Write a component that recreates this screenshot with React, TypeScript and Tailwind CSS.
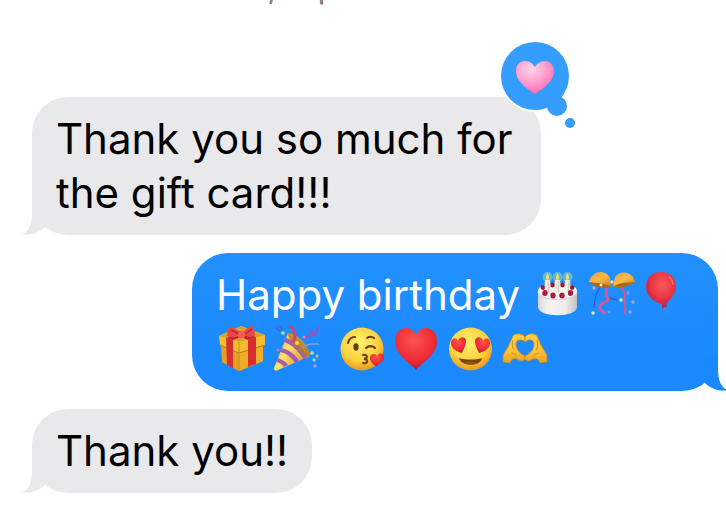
import type { ReactNode } from 'react';

function Emoji({ label, children }: { label: string; children: ReactNode }) {
  return (
    <svg role="img" aria-label={label} viewBox="1 0 54 54" className="inline-block size-[54px] align-top">
      {children}
    </svg>
  );
}

const HEART = 'M27 48C24 43 6 34 6 19C6 11 11 6 17 6C22 6 25 9 27 13C29 9 32 6 37 6C43 6 48 11 48 19C48 34 30 43 27 48Z';

function Gradients() {
  return (
    <svg width="0" height="0" className="absolute" aria-hidden="true">
      <defs>
        <radialGradient id="face" cx="45%" cy="35%" r="65%">
          <stop offset="0" stopColor="#fff06c" />
          <stop offset="0.65" stopColor="#fdd23f" />
          <stop offset="1" stopColor="#eb981d" />
        </radialGradient>
        <radialGradient id="red" cx="45%" cy="30%" r="70%">
          <stop offset="0" stopColor="#fb5450" />
          <stop offset="0.7" stopColor="#ef2a34" />
          <stop offset="1" stopColor="#b81b2c" />
        </radialGradient>
        <radialGradient id="balloon" cx="55%" cy="35%" r="65%">
          <stop offset="0" stopColor="#fa5a5c" />
          <stop offset="0.6" stopColor="#e83544" />
          <stop offset="1" stopColor="#bd1f3a" />
        </radialGradient>
        <radialGradient id="pink" cx="40%" cy="25%" r="80%">
          <stop offset="0" stopColor="#ffd5ea" />
          <stop offset="0.5" stopColor="#ff9fcd" />
          <stop offset="1" stopColor="#fb62ad" />
        </radialGradient>
        <linearGradient id="cake" x1="0" x2="1">
          <stop offset="0" stopColor="#d4d3d6" />
          <stop offset="0.25" stopColor="#f6f4f3" />
          <stop offset="0.7" stopColor="#efeceb" />
          <stop offset="1" stopColor="#c4c1c5" />
        </linearGradient>
        <linearGradient id="gold" x1="0" y1="0" x2="1" y2="1">
          <stop offset="0" stopColor="#e9a033" />
          <stop offset="0.5" stopColor="#f8ba4b" />
          <stop offset="1" stopColor="#c57a20" />
        </linearGradient>
        <linearGradient id="cone" x1="0" y1="0" x2="1" y2="0.6">
          <stop offset="0" stopColor="#c99226" />
          <stop offset="0.45" stopColor="#ffe36a" />
          <stop offset="1" stopColor="#d79a28" />
        </linearGradient>
        <linearGradient id="hand" x1="0" y1="0" x2="0" y2="1">
          <stop offset="0" stopColor="#ffce42" />
          <stop offset="0.6" stopColor="#fcc439" />
          <stop offset="1" stopColor="#e99e24" />
        </linearGradient>
      </defs>
    </svg>
  );
}

function Cake() {
  return (
    <Emoji label="Birthday cake">
      <path d="M7 23V39C7 50 46 50 46 39V23Z" fill="url(#cake)" />
      <ellipse cx="26.5" cy="23" rx="19.5" ry="8" fill="#faf8f7" />
      <path d="M7 24C8 34 45 34 46 24" fill="none" stroke="#d9d5d5" strokeWidth="1" />
      <g fill="#9f1735">
        <circle cx="21.5" cy="17" r="2.4" />
        <circle cx="31.5" cy="17" r="2.4" />
        <circle cx="12" cy="19.5" r="2.4" />
        <circle cx="41" cy="19.5" r="2.4" />
      </g>
      {[16.5, 26.5, 36.5].map(x => (
        <g key={x}>
          <circle cx={x} cy="9" r="5" fill="#b7ed9f" opacity="0.45" />
          <rect x={x - 2.7} y="12" width="5.4" height="13" rx="1" fill="#f2efdf" />
          <path d={`M${x + 1} 13v11`} stroke="#d2cfb9" strokeWidth="1.4" />
          <path d={`M${x} 5c2 3 2 7 0 7s-2-4 0-7Z`} fill="#ffdc51" />
        </g>
      ))}
      <g fill="#ad1b3d">
        <ellipse cx="14" cy="25" rx="2.7" ry="3" />
        <ellipse cx="22" cy="27.5" rx="2.7" ry="3" />
        <ellipse cx="31" cy="27.5" rx="2.7" ry="3" />
        <ellipse cx="39.5" cy="25" rx="2.7" ry="3" />
      </g>
    </Emoji>
  );
}

function ConfettiBall() {
  return (
    <Emoji label="Confetti ball">
      <path d="M17 17C10 25 10 31 9 39" fill="none" stroke="#245be0" strokeWidth="1.2" />
      <path d="M20 17C24 23 19 25 22 29C26 34 17 33 15 38C13 42 18 43 20 46" fill="none" stroke="#e75395" strokeWidth="2.6" />
      <path d="M33 18C41 20 40 30 40 46" fill="none" stroke="#d8548e" strokeWidth="2" />
      <path d="M25 30l7 2" stroke="#3b54d8" strokeWidth="1.4" />
      <path d="M4 14C7 2 21 1 25 10L26 19C19 19 10 18 4 14Z" fill="url(#gold)" />
      <path d="M28 19L30 9C36 1 48 4 50 14C44 18 35 20 28 19Z" fill="url(#gold)" />
      <path d="M4 14C12 15 20 15 26 19C18 21 9 19 4 14ZM28 19C34 14 42 15 50 14C44 18 36 21 28 19Z" fill="#aa671d" />
      <circle cx="27" cy="14" r="1.7" fill="#fee088" />
      <circle cx="9" cy="20" r="1.7" fill="#cb9cee" />
      <circle cx="16" cy="17" r="1.5" fill="#fff2ba" />
      <circle cx="36" cy="32" r="1.8" fill="#ccefbf" />
      <circle cx="43" cy="25" r="1.7" fill="#9d8bd3" />
      <circle cx="48" cy="34" r="1.7" fill="#baa0a6" />
      <circle cx="8" cy="45" r="1.8" fill="#c6edc0" />
      <circle cx="45" cy="44" r="1.8" fill="#9c9bee" />
      <circle cx="24" cy="44" r="1.4" fill="#58a1ff" />
    </Emoji>
  );
}

function Balloon() {
  return (
    <Emoji label="Balloon">
      <path d="M25 38C25 43 28 42 29 46" fill="none" stroke="#7c78bd" strokeWidth="1" />
      <path d="M22 4C31 4 37 10 37 18C37 27 30 32 27 36L28 39L23 40L23 36C14 34 7 27 7 19C7 10 13 4 22 4Z" fill="url(#balloon)" />
      <path d="M30 9C33 11 34 14 34 17" fill="none" stroke="#ff918c" strokeWidth="1.5" opacity="0.6" />
    </Emoji>
  );
}

function Gift() {
  return (
    <Emoji label="Wrapped gift">
      <path d="M6 22L24 29L48 23V39L24 49L7 40Z" fill="#e5a020" />
      <path d="M24 29L48 23V39L24 49Z" fill="#eeae25" />
      <path d="M4 14L26 4L50 13V23L24 31L5 23Z" fill="#f6bd32" />
      <path d="M4 14L26 4L50 13L24 20Z" fill="#d9a42c" />
      <path d="M5 23L24 31L50 23" fill="none" stroke="#b9771a" strokeWidth="1" />
      <path d="M24 20V49" stroke="#c98a20" strokeWidth="1" />
      <path d="M11 16L18 18V46L12 43ZM33 18L41 15V42L33 45Z" fill="#d92d31" />
      <path d="M11 16L33 8L39 10L18 18ZM33 18L15 10L20 8L41 15Z" fill="#bd2430" />
      <path d="M25 12C20 4 14 3 13 8L12 14C16 16 21 16 25 13ZM29 12C31 5 37 2 39 6L40 13C37 16 32 15 29 13Z" fill="#ec4746" />
      <path d="M16 8L24 12M37 7L30 12" stroke="#bb2330" strokeWidth="1.4" />
      <rect x="23" y="9" width="7" height="7" rx="2.5" fill="#fb5b54" />
    </Emoji>
  );
}

function PartyPopper() {
  return (
    <Emoji label="Party popper">
      <path d="M19 11L5 46C5 49 7 49 9 48L41 34C40 23 28 12 19 11Z" fill="url(#cone)" />
      <path d="M13 26C21 28 28 34 30 39L26 41C22 35 17 31 11 30ZM9 36C14 38 18 41 19 43L15 45C13 42 11 41 7 40ZM17 16C25 18 35 27 38 35L34 37C30 29 23 23 15 20Z" fill="#a75bb7" />
      <path d="M19 11C17 16 35 37 41 34C43 29 26 9 19 11Z" fill="#b67921" opacity="0.8" />
      <path d="M24 20C28 14 26 7 20 4" fill="none" stroke="#df3c62" strokeWidth="2.8" />
      <path d="M36 18C37 10 41 17 43 12C45 6 40 10 43 13C48 14 47 7 50 5" fill="none" stroke="#9852bd" strokeWidth="2" />
      <path d="M33 26C39 21 44 22 50 22" fill="none" stroke="#859ddd" strokeWidth="1.6" />
      <path d="M7 5C11 12 15 6 10 4" fill="none" stroke="#496bd0" strokeWidth="1.8" />
      <circle cx="14" cy="11" r="1.8" fill="#b8e990" />
      <circle cx="28" cy="21" r="2" fill="#f7d74a" />
      <circle cx="43" cy="31" r="1.9" fill="#9eddb1" />
      <circle cx="48" cy="34" r="1.5" fill="#d0bc79" />
      <circle cx="45" cy="38" r="1.7" fill="#a5cddd" />
      <circle cx="46" cy="44" r="1.7" fill="#bd8ce6" />
      <circle cx="9" cy="28" r="1.5" fill="#c275d8" />
      <circle cx="35" cy="15" r="1.5" fill="#d87fc6" />
    </Emoji>
  );
}

function KissFace() {
  return (
    <Emoji label="Face blowing a kiss">
      <circle cx="27" cy="27" r="21.5" fill="url(#face)" />
      <g fill="none" stroke="#6b3d12" strokeWidth="2" strokeLinecap="round">
        <path d="M13 21C14 17 17 15 20 15M32 16C35 14 38 15 39 16" />
        <path d="M31 26C34 23 38 24 40 26" strokeWidth="2.2" />
        <path d="M28 33C33 32 33 36 29 37C34 37 33 42 28 41" />
      </g>
      <ellipse cx="21" cy="25" rx="2.7" ry="3.7" fill="#6b3d12" />
      <path d="M41 44C37 42 33 37 36 33C38 31 41 32 42 34C44 30 49 31 49 35C50 39 44 42 41 44Z" fill="url(#red)" />
    </Emoji>
  );
}

function HeartEyes() {
  const eye = 'M19 31C15 30 8 27 8 21C8 16 13 15 15 19C16 14 23 14 23 19C23 24 20 28 19 31Z';
  return (
    <Emoji label="Smiling face with heart eyes">
      <circle cx="27.5" cy="27" r="21.5" fill="url(#face)" />
      <path d="M16 36C21 38 34 38 39 36C38 45 18 45 16 36Z" fill="#74440f" />
      <path d="M21 41C25 39 30 39 34 41C31 43 24 43 21 41Z" fill="#a25a16" opacity="0.7" />
      <path d={eye} fill="url(#red)" />
      <path d={eye} fill="url(#red)" transform="translate(55 0) scale(-1 1)" />
    </Emoji>
  );
}

function HeartHands() {
  // right half is the left one mirrored around the heart's axis
  const hand = (
    <>
      <path
        d="M28 15C25 11 18 11 16 14L11 25L6 33L6 40L13 41C14 37 17 36 20 37L24 39C27 39 29 37 28 34C22 31 19 27 19 22C19 18 24 16 28 20Z"
        fill="url(#hand)"
        stroke="#c88522"
        strokeWidth="0.8"
      />
      <path d="M14 31C17 31 19 33 20 35M16 18C15 22 15 25 17 28" fill="none" stroke="#d48e20" strokeWidth="1" />
    </>
  );
  return (
    <Emoji label="Heart hands">
      {hand}
      <g transform="translate(56 0) scale(-1 1)">{hand}</g>
    </Emoji>
  );
}

function Tail({ sent }: { sent?: boolean }) {
  return (
    <svg
      viewBox="0 0 26 36"
      aria-hidden="true"
      className={`absolute -bottom-px h-9 w-[26px] ${sent ? '-right-[10px] -scale-x-100 text-[#1a88ff]' : '-left-[10px] text-[#e9e9eb]'}`}
    >
      <path d="M10 0V13C10 24 7 32 0 34C8 36 17 33 23 27L26 16V0Z" fill="currentColor" />
    </svg>
  );
}

function Bubble({ sent, children }: { sent?: boolean; children: ReactNode }) {
  return (
    <div
      className={`relative rounded-[36px] px-6 py-[15px] ${
        sent
          ? 'max-w-[526px] self-end bg-linear-to-b from-[#2190ff] to-[#1a88ff] text-white'
          : 'max-w-[509px] self-start bg-[#e9e9eb] text-black'
      }`}
    >
      <Tail sent={sent} />
      <div className="relative">{children}</div>
    </div>
  );
}

function HeartReaction() {
  return (
    <svg role="img" aria-label="Loved" viewBox="0 0 84 96" className="absolute -top-[76px] -right-16 h-24 w-[84px]">
      <g fill="#fff">
        <circle cx="38" cy="40" r="36" />
        <circle cx="60" cy="70" r="11" />
      </g>
      <g fill="#359dfd">
        <circle cx="38" cy="40" r="34" />
        <circle cx="60" cy="70" r="10" />
        <circle cx="73" cy="87" r="5" />
      </g>
      <path d="M38 58C34 55 19 47 19 35C19 29 23 25 28 25C33 25 36 28 38 31C40 28 43 25 48 25C53 25 57 29 57 35C57 47 42 55 38 58Z" fill="url(#pink)" />
    </svg>
  );
}

export default function App() {
  return (
    <main className="min-h-screen overflow-hidden bg-white font-['Inter',sans-serif]">
      <Gradients />
      <p className="-mt-[29px] text-center text-[28px] leading-9 font-medium text-[#808084]">Thu, Sep 5 at 7:38 PM</p>
      <div className="mt-[90px] flex flex-col gap-[18px] pr-2 pl-8 text-[42px] leading-[54px]">
        <Bubble>
          Thank you so much for the gift card!!!
          <HeartReaction />
        </Bubble>
        <Bubble sent>
          Happy birthday <Cake />
          <ConfettiBall />
          <Balloon />
          <Gift />
          <PartyPopper /> <KissFace />
          <Emoji label="Red heart">
            <path d={HEART} fill="url(#red)" />
          </Emoji>
          <HeartEyes />
          <HeartHands />
        </Bubble>
        <Bubble>Thank you!!</Bubble>
      </div>
    </main>
  );
}
